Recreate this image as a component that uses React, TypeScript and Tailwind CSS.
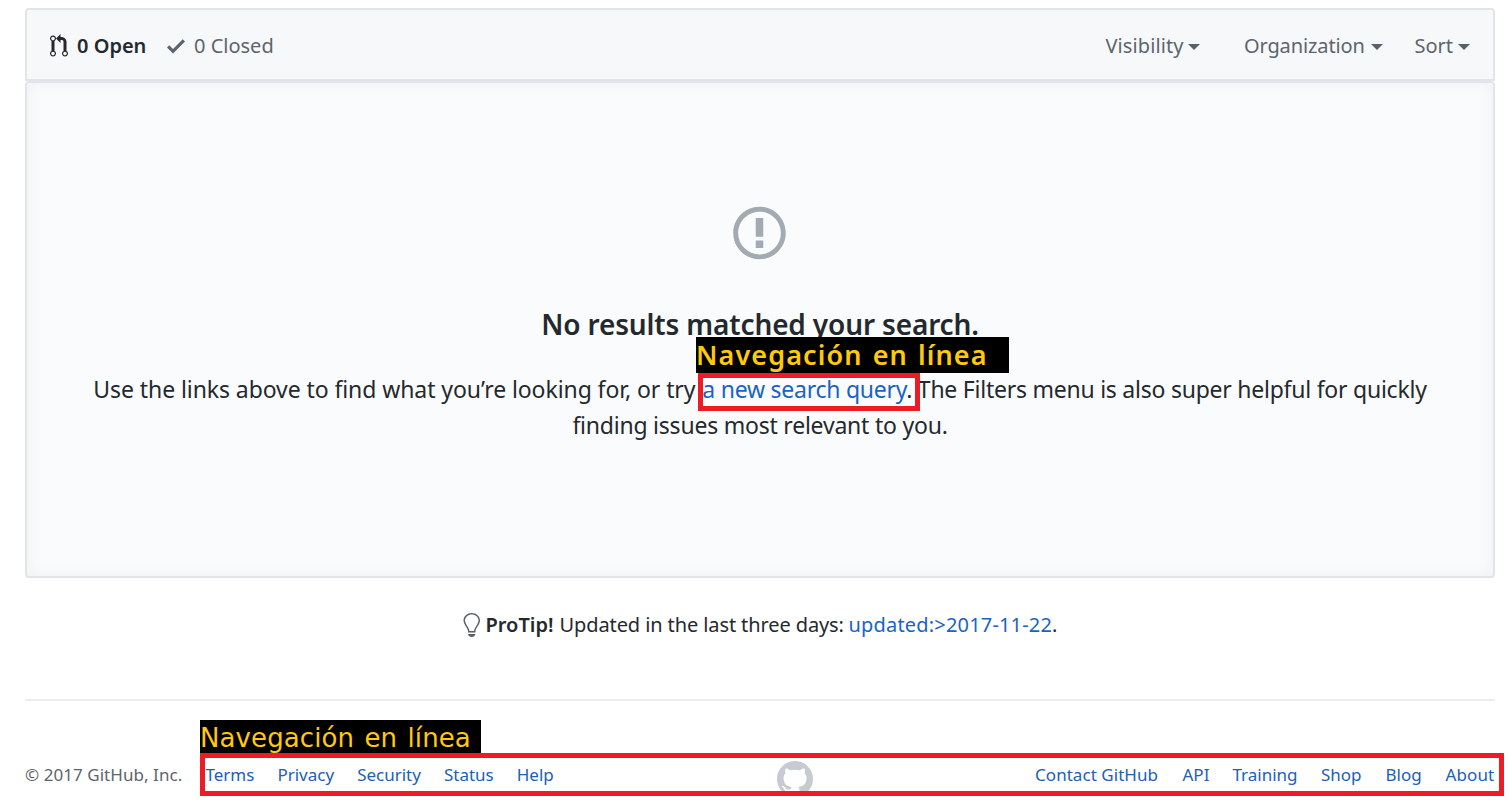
function PullRequestIcon() {
  return (
    <svg width="18" height="24" viewBox="0 0 12 16" fill="currentColor" aria-hidden="true">
      <path fillRule="evenodd" d="M11 11.28V5c-.03-.78-.34-1.47-.94-2.06C9.46 2.35 8.78 2.03 8 2H7V0L4 3l3 3V4h1c.27.02.48.11.69.31.21.2.3.42.31.69v6.28A1.993 1.993 0 0 0 10 15a1.993 1.993 0 0 0 1-3.72zm-1 2.92c-.66 0-1.2-.55-1.2-1.2 0-.65.55-1.2 1.2-1.2.65 0 1.2.55 1.2 1.2 0 .65-.55 1.2-1.2 1.2zM4 3c0-1.11-.89-2-2-2a1.993 1.993 0 0 0-1 3.72v6.56A1.993 1.993 0 0 0 2 15a1.993 1.993 0 0 0 1-3.72V4.72c.59-.34 1-.98 1-1.72zm-.8 10c0 .66-.55 1.2-1.2 1.2-.65 0-1.2-.55-1.2-1.2 0-.65.55-1.2 1.2-1.2.65 0 1.2.55 1.2 1.2zM2 4.2C1.34 4.2.8 3.65.8 3c0-.65.55-1.2 1.2-1.2.65 0 1.2.55 1.2 1.2 0 .65-.55 1.2-1.2 1.2z" />
    </svg>
  );
}

function CheckIcon() {
  return (
    <svg width="18" height="24" viewBox="0 0 12 16" fill="currentColor" aria-hidden="true">
      <path fillRule="evenodd" d="M12 5l-8 8-4-4 1.5-1.5L4 10l6.5-6.5L12 5z" />
    </svg>
  );
}

function IssueIcon() {
  return (
    <svg width="53" height="60" viewBox="0 0 14 16" fill="currentColor" aria-hidden="true">
      <path fillRule="evenodd" d="M7 2.3c3.14 0 5.7 2.56 5.7 5.7s-2.56 5.7-5.7 5.7A5.71 5.71 0 0 1 1.3 8c0-3.14 2.56-5.7 5.7-5.7zM7 1C3.14 1 0 4.14 0 8s3.14 7 7 7 7-3.14 7-7-3.14-7-7-7zm1 3H6v5h2V4zm0 6H6v2h2v-2z" />
    </svg>
  );
}

function BulbIcon() {
  return (
    <svg width="18" height="24" viewBox="0 0 12 16" fill="currentColor" aria-hidden="true">
      <path fillRule="evenodd" d="M6.5 0C3.48 0 1 2.19 1 5c0 .92.55 2.25 1 3 1.34 2.25 1.78 2.78 2 4v1h5v-1c.22-1.22.66-1.75 2-4 .45-.75 1-2.08 1-3 0-2.81-2.48-5-5.5-5zm3.64 7.48c-.25.44-.47.8-.67 1.11-.86 1.41-1.25 2.06-1.45 3.23-.02.05-.02.11-.02.17H5c0-.06 0-.13-.02-.17-.2-1.17-.59-1.83-1.45-3.23-.2-.31-.42-.67-.67-1.11C2.44 6.78 2 5.65 2 5c0-2.2 2.02-4 4.5-4 1.22 0 2.36.42 3.22 1.19C10.55 2.94 11 3.94 11 5c0 .66-.44 1.78-.86 2.48zM4 14h5c-.23 1.14-1.3 2-2.5 2s-2.27-.86-2.5-2z" />
    </svg>
  );
}

function MarkIcon() {
  return (
    <svg width="36" height="36" viewBox="0 0 16 16" fill="currentColor" aria-hidden="true">
      <path fillRule="evenodd" d="M8 0C3.58 0 0 3.58 0 8c0 3.54 2.29 6.53 5.47 7.59.4.07.55-.17.55-.38 0-.19-.01-.82-.01-1.49-2.01.37-2.53-.49-2.69-.94-.09-.23-.48-.94-.82-1.13-.28-.15-.68-.52-.01-.53.63-.01 1.08.58 1.23.82.72 1.21 1.87.87 2.33.66.07-.52.28-.87.51-1.07-1.78-.2-3.64-.89-3.64-3.95 0-.87.31-1.59.82-2.15-.08-.2-.36-1.02.08-2.12 0 0 .67-.21 2.2.82.64-.18 1.32-.27 2-.27.68 0 1.36.09 2 .27 1.53-1.04 2.2-.82 2.2-.82.44 1.1.16 1.92.08 2.12.51.56.82 1.27.82 2.15 0 3.07-1.87 3.75-3.65 3.95.29.25.54.73.54 1.48 0 1.07-.01 1.93-.01 2.2 0 .21.15.46.55.38A8.013 8.013 0 0 0 16 8c0-4.42-3.58-8-8-8z" />
    </svg>
  );
}

function Caret() {
  return <span className="mt-[2px] border-x-[6px] border-t-[6px] border-x-transparent border-t-[#586069]" />;
}

function Toolbar() {
  return (
    <header className="flex h-[73px] items-center rounded-t-[4px] border-2 border-[#e1e4e8] bg-[#f6f8fa] px-[23px] pt-[3px] text-[20px] leading-[30px] whitespace-nowrap text-[#5d646c]">
      <a className="flex items-center gap-[9px] font-semibold text-[#24292e]">
        <PullRequestIcon />
        <span className="w-[90px]">0 Open</span>
      </a>
      <a className="flex items-center gap-[9px]">
        <CheckIcon />
        <span>0 Closed</span>
      </a>
      <nav className="ml-auto flex">
        <button className="flex w-[138.5px] items-center justify-between pr-[44px] tracking-[0.1px]">
          Visibility <Caret />
        </button>
        <button className="flex w-[170.5px] items-center justify-between pr-[32px]">
          <span className="tracking-[-0.12px]">Organization</span> <Caret />
        </button>
        <button className="flex w-[55.5px] items-center justify-between">
          Sort <Caret />
        </button>
      </nav>
    </header>
  );
}

function BlankSlate() {
  return (
    <section className="flex h-[497px] flex-col items-center rounded-[4px] border-2 border-[#e1e4e8] bg-[#fafbfc] pt-[120px] text-[23px] leading-9 whitespace-nowrap text-[#24292e] shadow-[inset_0_0_15px_rgba(27,31,35,0.05)]">
      <span className="mr-px text-[#a3aab1]">
        <IssueIcon />
      </span>
      <h3 className="mt-[40px] text-[28px] leading-[42px] font-semibold tracking-[-0.15px]">
        No results matched your search.
      </h3>
      <p className="mt-[26px] flex">
        <span className="w-[609px] tracking-[-0.08px]">
          Use the links above to find what you’re looking for, or try
        </span>
        <span className="w-[215.5px] tracking-[-0.25px]">
          <a className="text-[#1a63c4]">a new search query</a>.
        </span>
        <span className="tracking-[-0.24px]">The Filters menu is also super helpful for quickly</span>
      </p>
      <p className="tracking-[-0.22px]">finding issues most relevant to you.</p>
    </section>
  );
}

function ProTip() {
  return (
    <p className="mt-[32px] flex h-[30px] pl-[436.5px] text-[20px] leading-[30px] whitespace-nowrap text-[#24292e]">
      <span className="mt-[3px] mr-[6px] text-[#586069]">
        <BulbIcon />
      </span>
      <strong className="w-[74px] font-semibold">ProTip!</strong>
      <span className="w-[289px] tracking-[-0.1px]">Updated in the last three days:</span>
      <span className="tracking-[0.18px]">
        <a className="text-[#1a63c4]">updated:&gt;2017-11-22</a>.
      </span>
    </p>
  );
}

function Footer() {
  return (
    <footer className="mt-[59px] flex h-[101px] border-t-2 border-[#eaecef] pt-[60px] text-[17px] leading-[27px] whitespace-nowrap text-[#2160b4]">
      <span className="w-[180.5px] tracking-[0.05px] text-[#5d646c]">© 2017 GitHub, Inc.</span>
      <ul className="flex w-[571.5px] gap-[23px]">
        <li>Terms</li>
        <li>Privacy</li>
        <li>Security</li>
        <li>Status</li>
        <li>Help</li>
      </ul>
      <span className="text-[#c6cbd1]">
        <MarkIcon />
      </span>
      <ul className="ml-auto grid grid-cols-[147.5px_50px_88.5px_64.5px_60px_49.5px]">
        <li className="tracking-[0.05px]">Contact GitHub</li>
        <li>API</li>
        <li>Training</li>
        <li>Shop</li>
        <li>Blog</li>
        <li className="tracking-[0.1px]">About</li>
      </ul>
    </footer>
  );
}

function Annotations() {
  return (
    <div className="pointer-events-none text-[#ffc90e]">
      <div className="absolute top-[337px] left-[696px] h-9 w-[313px] overflow-hidden bg-black font-['Noto_Sans',sans-serif] text-[27px] leading-[36px] font-semibold tracking-[1.1px] whitespace-nowrap [word-spacing:2px]">
        Navegación en línea
      </div>
      <div className="absolute top-[373px] left-[698px] h-[38px] w-[222px] border-5 border-[#ed1c24]" />
      <div className="absolute top-[720px] left-[200px] h-[33px] w-[281px] overflow-hidden bg-black font-['DejaVu_Sans',sans-serif] text-[26px] leading-[37px] tracking-[0.1px] whitespace-nowrap [word-spacing:2px]">
        Navegación en línea
      </div>
      <div className="absolute top-[753px] left-[200px] h-[43px] w-[1304px] border-5 border-[#ed1c24]" />
    </div>
  );
}

export default function App() {
  return (
    <div className="relative h-[801px] w-[1510px] overflow-hidden bg-white pt-2 pr-[15px] pl-[25px] font-['Noto_Sans',sans-serif]">
      <Toolbar />
      <BlankSlate />
      <ProTip />
      <Footer />
      <Annotations />
    </div>
  );
}
